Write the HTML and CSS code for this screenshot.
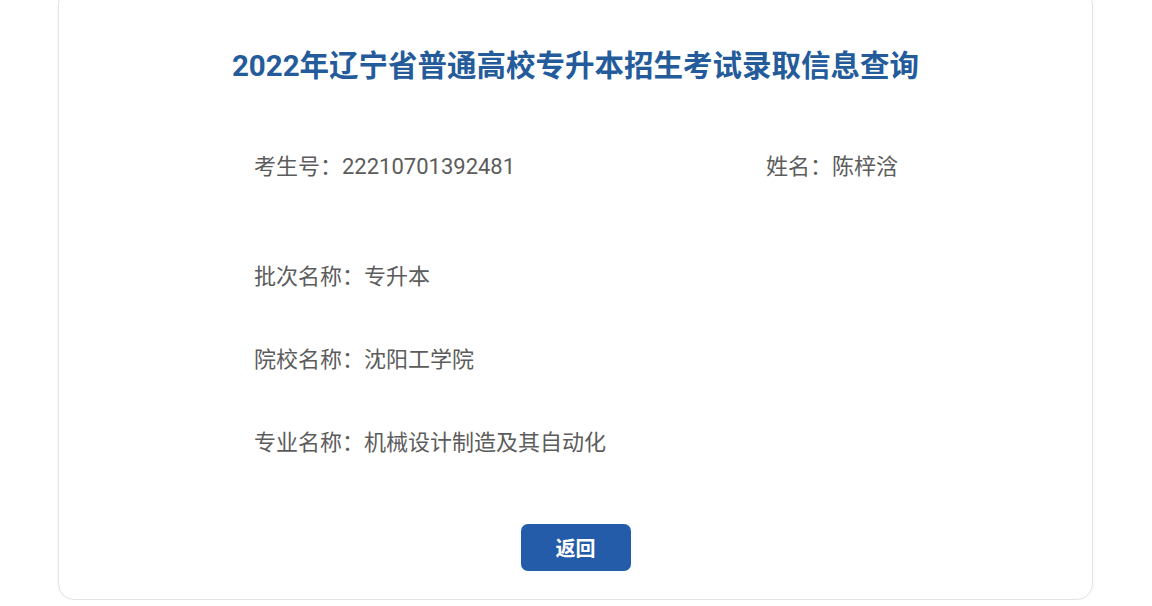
FILE: index.html
```html
<!DOCTYPE html>
<html lang="zh-CN">

<head>
    <title>录取信息查询</title>
    <meta charset="UTF-8">
    <meta name="viewport" content="width=device-width, initial-scale=1">
    <link rel="stylesheet" href="styles.css">
</head>

<body>
    <div class="card">
        <h1 class="title">2022年辽宁省普通高校专升本招生考试录取信息查询</h1>

        <div class="info">
            <div class="row row-first">
                <div class="cell">考生号：22210701392481</div>
                <div class="cell">姓名：陈梓浛</div>
            </div>
            <div class="row">
                <div class="cell">批次名称：专升本</div>
            </div>
            <div class="row">
                <div class="cell">院校名称：沈阳工学院</div>
            </div>
            <div class="row">
                <div class="cell">专业名称：机械设计制造及其自动化</div>
            </div>
        </div>

        <div class="actions">
            <button class="btn" type="button">返回</button>
        </div>
    </div>
</body>

</html>
```

FILE: styles.css
```css
* {
    margin: 0;
    padding: 0;
    box-sizing: border-box;
}

body {
    background: #fff;
    font-family: Roboto, "Noto Sans CJK SC", sans-serif;
}

.card {
    width: 1035px;
    height: 612px;
    margin: -12px 0 0 58px;
    padding: 57px 0 0 0;
    border: 1px solid #e3e3e3;
    border-radius: 16px;
    box-shadow: 0 0 4px rgba(0, 0, 0, 0.04);
    display: flex;
    flex-direction: column;
}

.title {
    height: 40px;
    line-height: 40px;
    text-align: center;
    font-size: 29.5px;
    font-weight: bold;
    color: #245b9b;
}

.info {
    margin-top: 66px;
    padding-left: 195px;
    display: flex;
    flex-direction: column;
    gap: 53px;
}

.row {
    display: grid;
    grid-template-columns: 512px 1fr;
    height: 30px;
    line-height: 30px;
    font-size: 22px;
    color: #5c5c5c;
}

.row-first {
    margin-bottom: 27px;
}

.actions {
    margin-top: 66px;
    display: flex;
    justify-content: center;
}

.btn {
    width: 110px;
    height: 47px;
    border: none;
    border-radius: 7px;
    background: #245ca9;
    color: #fff;
    font-family: "Noto Sans CJK SC", sans-serif;
    font-size: 20px;
    font-weight: bold;
    cursor: pointer;
}
```
